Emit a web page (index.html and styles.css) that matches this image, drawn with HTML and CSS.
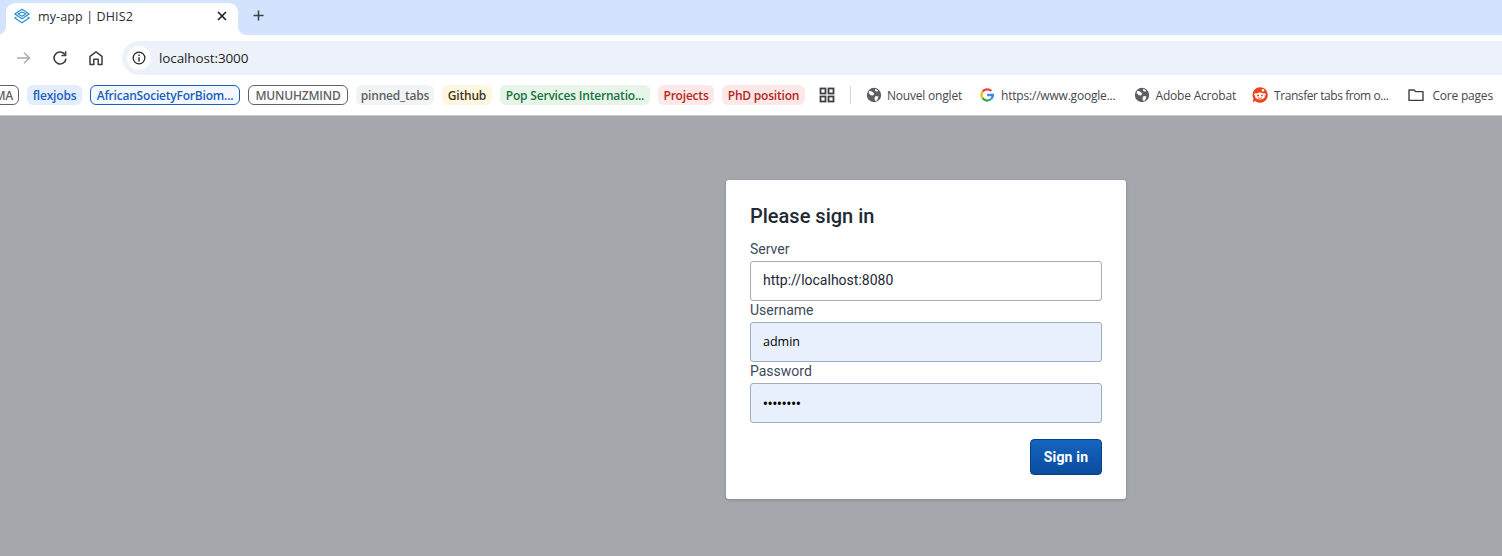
FILE: index.html
```html
<!DOCTYPE html>
<html lang="en">
<head>
<meta charset="utf-8">
<title>my-app | DHIS2</title>
<link rel="stylesheet" href="styles.css">
</head>
<body>
<div class="browser">
  <div class="tabstrip">
    <div class="tab">
      <svg class="favicon" viewBox="0 0 16 16" width="16" height="16" fill="none" stroke="#2a8fd0" stroke-width="1.2" stroke-linejoin="round"><path d="M8 1.2 15.2 6 8 10.8 .8 6Z"/><path d="M8 4 12 6 8 8.2 4 6Z"/><path d="M2.4 8.9 .8 10 8 14.8 15.2 10 13.6 8.9"/></svg>
      <span class="tab-title">my-app | DHIS2</span>
      <svg class="tab-close" viewBox="0 0 10 10" width="10" height="10" stroke="#222" stroke-width="1.7"><path d="M1 1 9 9M9 1 1 9"/></svg>
    </div>
    <svg class="new-tab" viewBox="0 0 12 12" width="11" height="11" stroke="#3c4043" stroke-width="1.7"><path d="M6 .5V11.5M.5 6H11.5"/></svg>
  </div>
  <div class="toolbar">
    <svg class="tool-back" viewBox="0 0 16 16" width="16" height="16" fill="none" stroke="#a9abad" stroke-width="1.5"><path d="M2 8H14.5M9 2.8 14.5 8 9 13.2"/></svg>
    <svg class="tool-reload" viewBox="0 0 16 16" width="16" height="16" fill="none" stroke="#3c4043" stroke-width="1.6"><path d="M13 4.6A6 6 0 1 0 14 8.6"/><path d="M13.6 1.2V5.4H9.4" stroke-width="1.5"/></svg>
    <svg class="tool-home" viewBox="0 0 16 16" width="16" height="16" fill="none" stroke="#3c4043" stroke-width="1.5" stroke-linejoin="round"><path d="M2 14.5V6.4L8 1.8 14 6.4V14.5H10.2V9.2H5.8V14.5Z"/></svg>
    <div class="omnibox">
      <span class="info-wrap">
        <svg viewBox="0 0 16 16" width="14" height="14" fill="none" stroke="#222" stroke-width="1.4"><circle cx="8" cy="8" r="6.7"/><path d="M8 7V12" stroke-width="1.6"/><path d="M8 4V5.6" stroke-width="1.6"/></svg>
      </span>
      <span class="url">localhost:3000</span>
    </div>
  </div>
  <div class="bookmarks">
    <span class="chip chip-grey-out chip-first">MA</span>
    <span class="chip chip-blue">flexjobs</span>
    <span class="chip chip-blue-out">AfricanSocietyForBiom...</span>
    <span class="chip chip-grey-out chip-mun">MUNUHZMIND</span>
    <span class="chip chip-grey">pinned_tabs</span>
    <span class="chip chip-yellow">Github</span>
    <span class="chip chip-green">Pop Services Internatio...</span>
    <span class="chip chip-red">Projects</span>
    <span class="chip chip-red">PhD position</span>
    <svg class="apps" viewBox="0 0 16 16" width="16" height="16" fill="none" stroke="#3c4043" stroke-width="1.8"><rect x="1.5" y="1.5" width="5" height="5"/><rect x="9.5" y="1.5" width="5" height="5"/><rect x="1.5" y="9.5" width="5" height="5"/><rect x="9.5" y="9.5" width="5" height="5"/></svg>
    <span class="sep"></span>
    <span class="bm bm-nouvel">
      <svg viewBox="0 0 16 16" width="16" height="16"><circle cx="8" cy="8" r="7.2" fill="#5b5e62"/><path d="M3.2 3.8 6 4.4 8.4 6.4 7 8.6 4.8 8.2 2.6 6ZM9.6 9 12.6 9.6 11 13.4 9 13.8 8.4 11ZM9.2 1.8 12.4 3.4 11.2 4.8 9 3.8Z" fill="#fff"/></svg>
      <span>Nouvel onglet</span>
    </span>
    <span class="bm bm-google">
      <svg viewBox="0 0 16 16" width="14" height="14" fill="none" stroke-width="2.6"><path d="M13 3.4A6.6 6.6 0 0 0 3 4.2" stroke="#ea4335"/><path d="M3 4.2A6.6 6.6 0 0 0 3 11.8" stroke="#fbbc05"/><path d="M3 11.8A6.6 6.6 0 0 0 12.6 12.6" stroke="#34a853"/><path d="M12.6 12.6A6.6 6.6 0 0 0 14.8 8H8.2" stroke="#4285f4"/></svg>
      <span>https://www.google...</span>
    </span>
    <span class="bm bm-acrobat">
      <svg viewBox="0 0 16 16" width="16" height="16"><circle cx="8" cy="8" r="7.2" fill="#5b5e62"/><path d="M3.2 3.8 6 4.4 8.4 6.4 7 8.6 4.8 8.2 2.6 6ZM9.6 9 12.6 9.6 11 13.4 9 13.8 8.4 11ZM9.2 1.8 12.4 3.4 11.2 4.8 9 3.8Z" fill="#fff"/></svg>
      <span>Adobe Acrobat</span>
    </span>
    <span class="bm bm-reddit">
      <svg viewBox="0 0 16 16" width="16" height="16"><path d="M8 .2A7.8 7.8 0 1 1 3 14L1 15.6 1.4 11.6A7.8 7.8 0 0 1 8 .2Z" fill="#f0441c"/><ellipse cx="8" cy="9" rx="5" ry="3.6" fill="#fff"/><circle cx="3.4" cy="7.4" r="1.2" fill="#fff"/><circle cx="12.6" cy="7.4" r="1.2" fill="#fff"/><circle cx="11" cy="3.2" r="1.2" fill="#fff"/><circle cx="6.1" cy="8.4" r="1" fill="#f0441c"/><circle cx="9.9" cy="8.4" r="1" fill="#f0441c"/><path d="M6 10.8Q8 12 10 10.8" stroke="#f0441c" stroke-width=".8" fill="none"/></svg>
      <span>Transfer tabs from o...</span>
    </span>
    <span class="bm bm-folder">
      <svg viewBox="0 0 16 16" width="16" height="16" fill="none" stroke="#3c4043" stroke-width="1.4" stroke-linejoin="round"><path d="M1 3H6L7.6 4.6H15V13.4H1Z"/></svg>
      <span>Core pages</span>
    </span>
  </div>
</div>
<main class="page">
  <form class="card">
    <h1 class="card-title">Please sign in</h1>
    <label class="field-label" for="server">Server</label>
    <input class="field" id="server" type="text" value="http://localhost:8080">
    <label class="field-label" for="username">Username</label>
    <input class="field field-auto" id="username" type="text" value="admin">
    <label class="field-label" for="password">Password</label>
    <input class="field field-auto field-pass" id="password" type="password" value="district">
    <div class="actions">
      <button class="submit" type="button">Sign in</button>
    </div>
  </form>
</main>
</body>
</html>
```
FILE: styles.css
```css
* { box-sizing: border-box; }
html, body { margin: 0; height: 556px; overflow: hidden; background: #a4a7ab; }
body { display: flex; flex-direction: column; }

.browser { flex: none; background: #fff; font-family: "Open Sans", "Liberation Sans", sans-serif; }

.tabstrip { display: flex; align-items: flex-start; height: 35px; background: #d3e3fd; }
.tab {
  position: relative; display: flex; align-items: center; width: 232px; height: 32px; margin: 3px 0 0 6px;
  padding: 0 9px 6px 8px; background: #fff; border-radius: 9px 9px 0 0;
}
.tab::before, .tab::after {
  content: ""; position: absolute; bottom: 0; width: 8px; height: 8px;
}
.tab::before { left: -8px; background: radial-gradient(circle at 0 0, #d3e3fd 7.5px, #fff 8px); }
.tab::after { right: -8px; background: radial-gradient(circle at 100% 0, #d3e3fd 7.5px, #fff 8px); }
.favicon { flex: none; }
.tab-title { flex: 1; margin-left: 8px; font-size: 12.5px; color: #2b2d30; letter-spacing: .12px; }
.tab-close { flex: none; margin-right: 2px; }
.new-tab { margin: 10px 0 0 15px; }

.toolbar { display: flex; align-items: center; height: 40px; padding: 6px 0 0 15px; }
.tool-reload { margin-left: 21px; }
.tool-home { margin-left: 20px; }
.omnibox {
  flex: 1; display: flex; align-items: center; height: 34px; margin-left: 18px; padding-left: 5px;
  background: #edf2fa; border-radius: 17px 0 0 17px;
}
.info-wrap {
  display: flex; align-items: center; justify-content: center; width: 24px; height: 24px;
  border-radius: 50%; background: #fff;
}
.url { margin-left: 8px; font-size: 13.5px; color: #1f1f1f; letter-spacing: -.12px; }

.bookmarks {
  display: flex; align-items: center; height: 41px; white-space: nowrap; overflow: hidden;
  border-bottom: 1px solid #c8cacd; font-size: 12px;
}
.chip {
  flex: none; display: flex; align-items: center; justify-content: center; height: 20px;
  margin-right: 8px; border-radius: 6px; font-weight: 600; letter-spacing: -.2px;
}
.chip-first { width: 36px; margin-left: -17px; justify-content: flex-end; padding-right: 5px; }
.chip:nth-child(2) { width: 55px; }
.chip:nth-child(3) { width: 150px; }
.chip:nth-child(4) { width: 100px; }
.chip:nth-child(5) { width: 78px; }
.chip:nth-child(6) { width: 50px; }
.chip:nth-child(7) { width: 150px; }
.chip:nth-child(8) { width: 56px; }
.chip:nth-child(9) { width: 83px; margin-right: 14px; }
.chip-grey-out { border: 1px solid #5f6368; color: #5f6368; }
.chip-blue { background: #e3edfc; color: #1a5fc0; }
.chip-blue-out { border: 1px solid #1a5fc0; color: #1a5fc0; background: #f3f7fe; }
.chip-grey { background: #f1f3f4; color: #5f6368; }
.chip-yellow { background: #fef6de; color: #3f3a22; }
.chip-green { background: #e6f4ea; color: #17743a; }
.chip-red { background: #fce8e6; color: #b3261e; }
.apps { flex: none; }
.sep { flex: none; width: 1px; height: 18px; margin-left: 15px; background: #c8d9ef; }
.bm { flex: none; display: flex; align-items: center; color: #45484c; letter-spacing: -.2px; }
.bm-nouvel { margin-left: 15px; gap: 5px; }
.bm-google { margin-left: 18px; gap: 7px; }
.bm-acrobat { margin-left: 18px; gap: 6px; }
.bm-reddit { margin-left: 16px; gap: 6px; letter-spacing: -.43px; }
.bm-folder { margin-left: 20px; gap: 8px; }

.page { flex: 1; display: flex; justify-content: center; padding: 64px 0 0 350px; background: #a4a7ab; }
.card {
  flex: none; display: flex; flex-direction: column; width: 400px; height: 319px; padding: 24px;
  background: #fff; border-radius: 3px; box-shadow: 0 1px 3px rgba(33, 41, 52, .25);
  font-family: Roboto, "Liberation Sans", sans-serif;
}
.card-title { flex: none; margin: 0 0 12px; font-size: 20px; line-height: 24px; font-weight: 500; color: #212934; }
.field-label { flex: none; height: 21px; font-size: 14px; line-height: 18px; color: #404b5a; }
.field {
  flex: none; width: 352px; height: 40px; padding: 0 12px 2px; margin: 0; font-family: inherit; font-size: 14px;
  color: #212934; background: #fff; border: 1px solid #a0adba; border-radius: 3px; outline: none;
}
.field-auto { background: #e8f0fe; color: #000; font-family: "Open Sans", sans-serif; font-size: 12.5px; font-weight: 500; }
.field-pass { padding-bottom: 0; font-weight: 600; }
.actions { flex: none; display: flex; justify-content: flex-end; margin-top: 16px; }
.submit {
  width: 72px; height: 36px; padding: 0; font-family: inherit; font-size: 14px; font-weight: 700; letter-spacing: .2px; color: #fff;
  background: linear-gradient(#1565c0, #0a4d9e); border: 1px solid #093f84; border-radius: 4px;
}
```
